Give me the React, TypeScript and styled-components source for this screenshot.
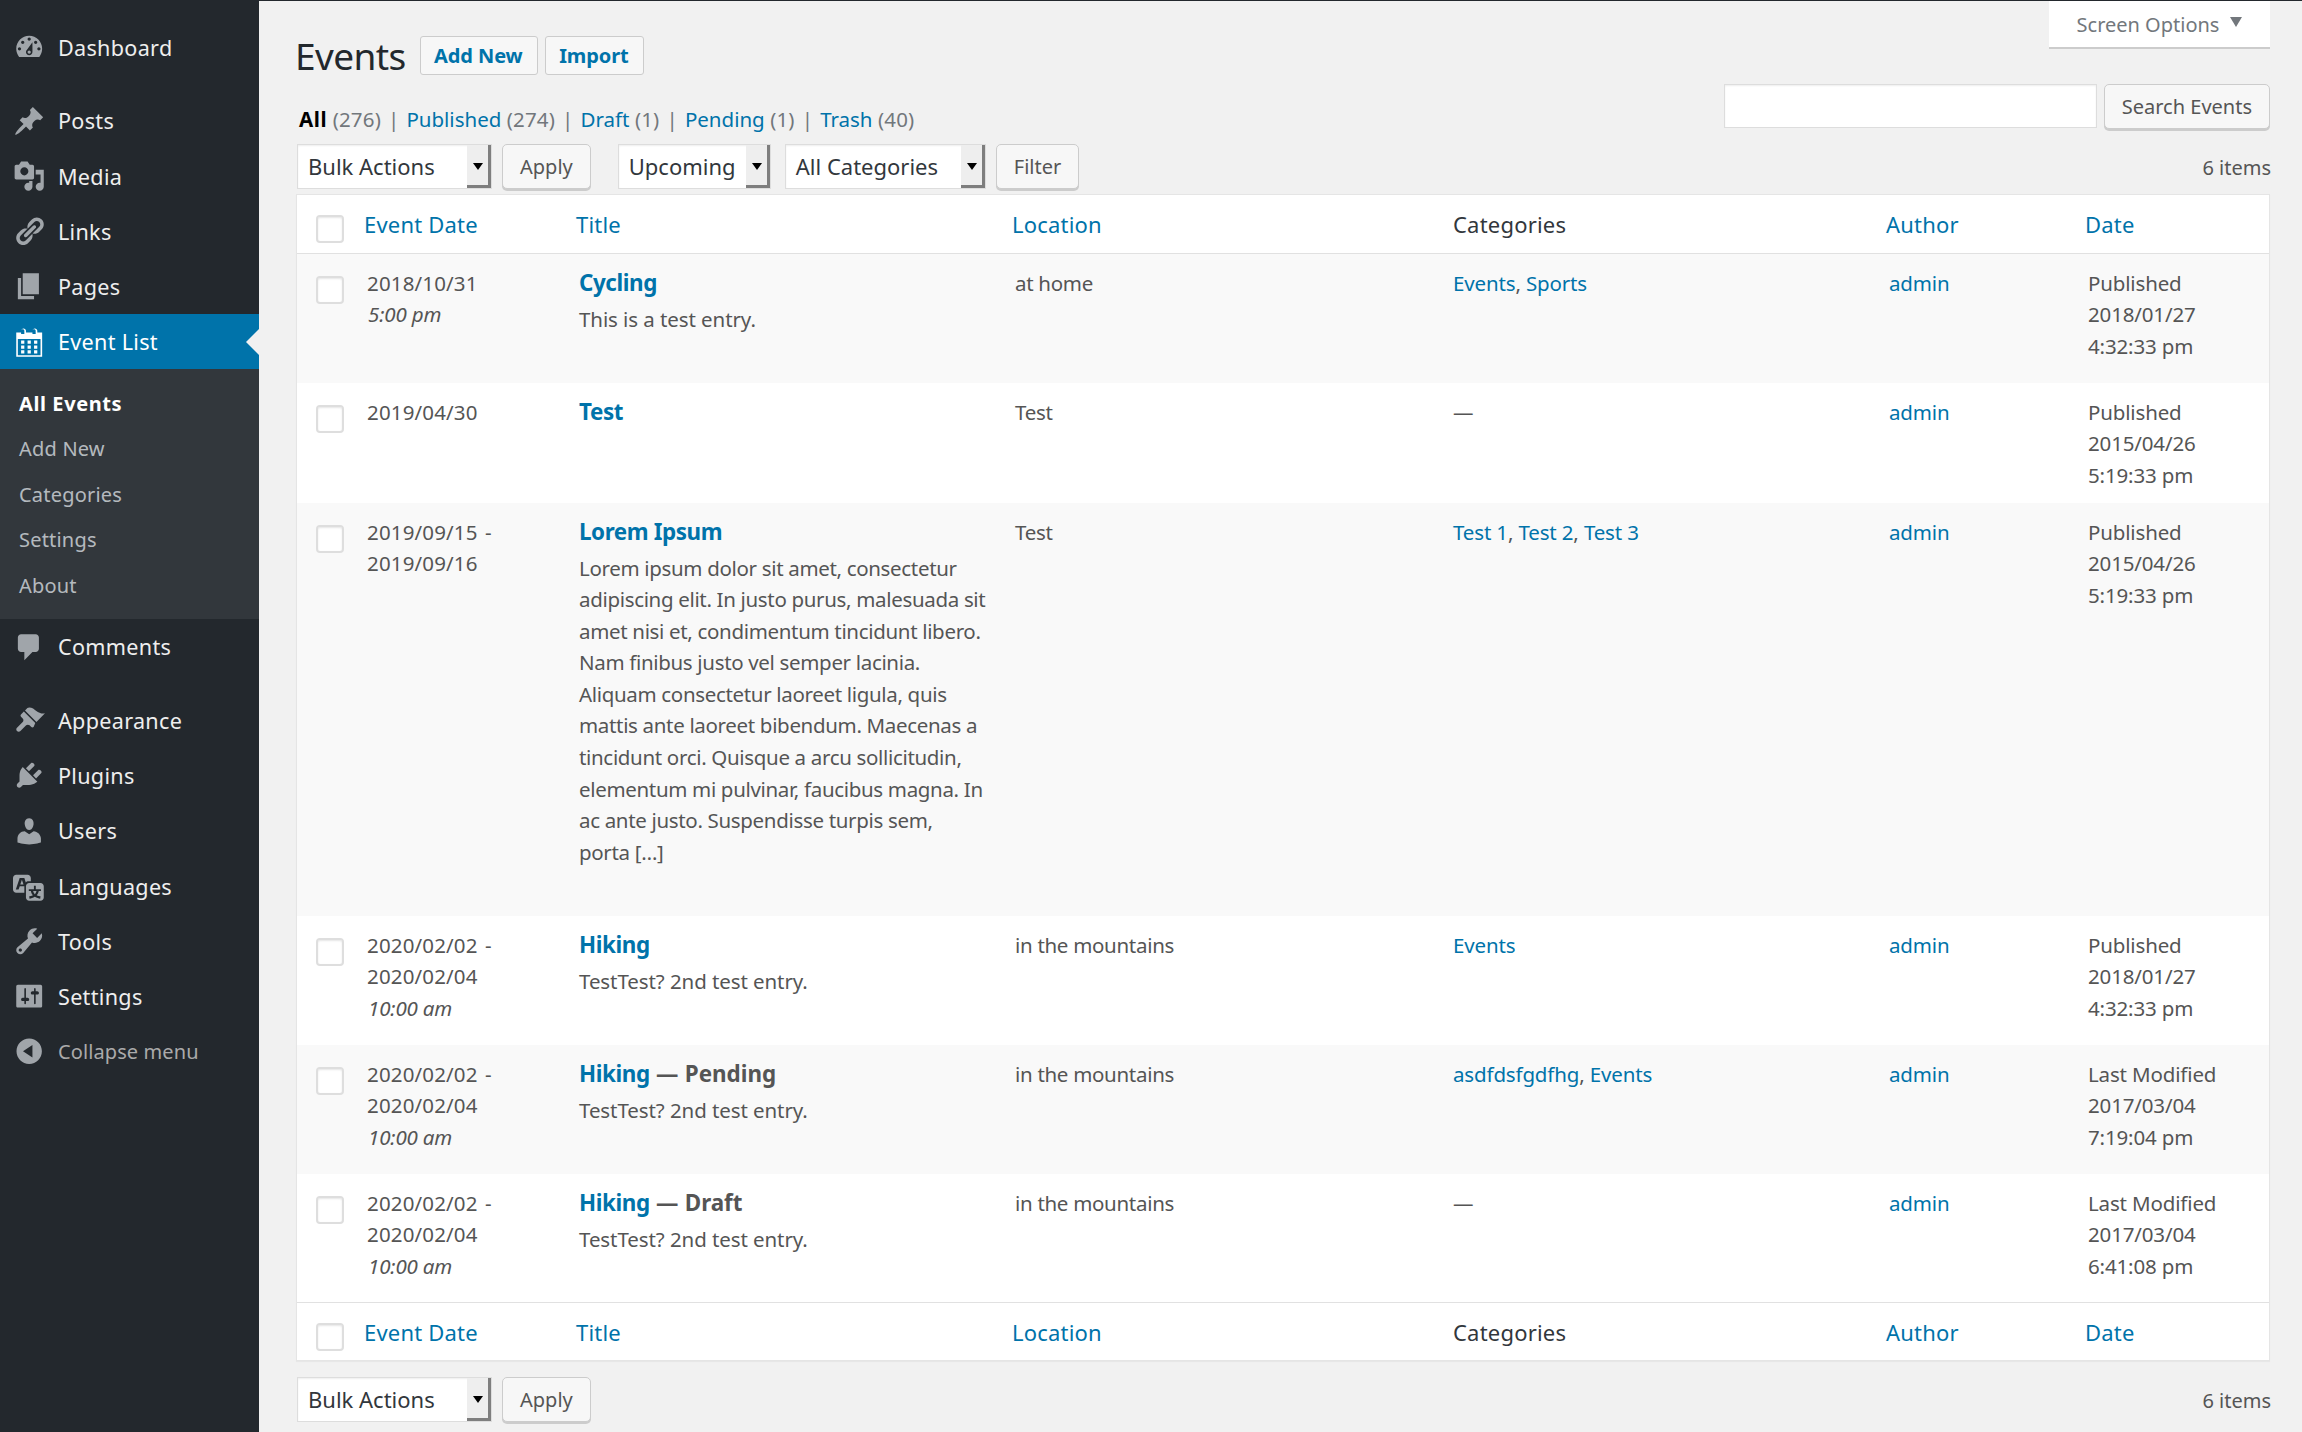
import React from "react";
import styled, { createGlobalStyle } from "styled-components";

const FONT = `"Noto Sans", "Open Sans", sans-serif`;

const GlobalStyle = createGlobalStyle`
	html, body {
		margin: 0;
		padding: 0;
		background: #f1f1f1;
		font-family: ${FONT};
	}
	* {
		box-sizing: border-box;
	}
`;

const Page = styled.div`
	display: flex;
	width: 2302px;
	min-height: 1432px;
	background: #f1f1f1;
	overflow: hidden;
`;

/* sidebar */
const Sidebar = styled.nav`
	width: 259px;
	flex: none;
	background: #23282d;
	padding-top: 19.8px;
`;

const MenuItem = styled.div<{ $active?: boolean }>`
	position: relative;
	display: flex;
	align-items: center;
	height: 55.2px;
	padding-left: 13px;
	gap: 12.6px;
	color: #eee;
	font-size: 21.6px;
	letter-spacing: 0.3px;
	background: ${(p) => (p.$active ? "#0073aa" : "transparent")};
	svg {
		fill: ${(p) => (p.$active ? "#fff" : "#a0a5aa")};
	}
	${(p) => p.$active && "color: #fff;"}
`;

const CollapseItem = styled(MenuItem)`
	color: #aaa;
	font-size: 20px;
	letter-spacing: 0.1px;
	svg {
		fill: #a0a5aa;
	}
`;

const ActiveArrow = styled.span`
	position: absolute;
	right: 0;
	top: 50%;
	margin-top: -13px;
	border: 13px solid transparent;
	border-right-color: #f1f1f1;
	border-left-width: 0;
`;

const MenuIcon = styled.svg`
	width: 32.4px;
	height: 32.4px;
	flex: none;
`;

const MenuSeparator = styled.div`
	height: 18.4px;
`;

const Submenu = styled.div`
	background: #32373c;
	padding: 11.5px 0 11px 19px;
`;

const SubItem = styled.div<{ $current?: boolean }>`
	height: 45.5px;
	line-height: 45.5px;
	font-size: 20px;
	letter-spacing: ${(p) => (p.$current ? "0.6px" : "0.2px")};
	color: ${(p) => (p.$current ? "#fff" : "rgba(240, 245, 250, 0.7)")};
	font-weight: ${(p) => (p.$current ? 700 : 400)};
`;

/* main column */
const Main = styled.main`
	flex: 1;
	min-width: 0;
	border-top: 1px solid #23282d;
	padding: 0 32px 0 37px;
	color: #555;
	font-size: 20.5px;
`;

const TopArea = styled.div`
	display: flex;
	justify-content: space-between;
	height: 143px;
`;

const TitleColumn = styled.div`
	padding-top: 35px;
`;

const TitleRow = styled.div`
	display: flex;
	align-items: center;
	height: 39px;
`;

const PageTitle = styled.h1`
	margin: 0 14px 0 -1px;
	font-size: 37px;
	font-weight: 400;
	letter-spacing: -0.6px;
	color: #23282d;
`;

const TitleAction = styled.a`
	height: 39px;
	line-height: 38px;
	padding: 0 14px 0 13.5px;
	margin-right: 7px;
	border: 1px solid #ccc;
	border-radius: 3px;
	background: #f7f7f7;
	color: #0073aa;
	font-size: 20px;
	font-weight: 700;
	letter-spacing: -0.1px;
`;

const Views = styled.div`
	display: flex;
	align-items: center;
	height: 32px;
	margin: 28px 0 0 3px;
	color: #72777c;
	font-size: 20.5px;
	letter-spacing: 0.15px;
	white-space: pre;
`;

const ViewLink = styled.a<{ $current?: boolean }>`
	color: ${(p) => (p.$current ? "#000" : "#0073aa")};
	font-weight: ${(p) => (p.$current ? 700 : 400)};
	letter-spacing: ${(p) => (p.$current ? "0.6px" : "0")};
`;

const ViewSep = styled.span`
	color: #72777c;
	margin: 0 7px;
`;

const RightColumn = styled.div`
	display: flex;
	flex-direction: column;
	align-items: flex-end;
	gap: 37px;
`;

const ScreenTab = styled.div`
	display: flex;
	align-items: center;
	justify-content: center;
	gap: 11px;
	width: 221px;
	height: 46px;
	background: #fff;
	color: #72777c;
	font-size: 20px;
	box-shadow: 0 2px 0 #ccc;
`;

const TabCaret = styled.span`
	border-style: solid;
	border-width: 10px 6.5px 0;
	border-color: #72777c transparent transparent;
	margin-top: -4px;
`;

const SearchForm = styled.div`
	display: flex;
	gap: 7px;
`;

const SearchInput = styled.div`
	width: 373px;
	height: 44px;
	background: #fff;
	border: 1px solid #ddd;
	box-shadow: inset 0 1px 2px rgba(0, 0, 0, 0.07);
`;

const Button = styled.div`
	display: flex;
	align-items: center;
	justify-content: center;
	height: 45px;
	padding: 0 17px;
	background: #f7f7f7;
	border: 1px solid #ccc;
	border-radius: 5px;
	box-shadow: 0 2px 0 #ccc;
	color: #555;
	font-size: 20px;
`;

const Toolbar = styled.div<{ $bottom?: boolean }>`
	display: flex;
	align-items: flex-start;
	height: 50px;
	padding-left: 1px;
	margin-top: ${(p) => (p.$bottom ? "16px" : "0")};
`;

const Select = styled.div<{ $width: number; $after: number; $before?: number }>`
	position: relative;
	display: flex;
	align-items: center;
	width: ${(p) => p.$width}px;
	height: 45px;
	margin-left: ${(p) => p.$before ?? 0}px;
	margin-right: ${(p) => p.$after}px;
	padding: 0 0 2px 10px;
	background: #fff;
	border: 1px solid #ddd;
	box-shadow: inset 0 1px 2px rgba(0, 0, 0, 0.07);
	color: #32373c;
	font-size: 22px;
`;

const SelectArrow = styled.span`
	position: absolute;
	right: 0;
	top: 0;
	bottom: 0;
	width: 24px;
	background: #eee;
	border-right: 3px solid #7e7e7e;
	border-bottom: 3px solid #7e7e7e;
	&::after {
		content: "";
		position: absolute;
		left: 6px;
		top: 18px;
		border-style: solid;
		border-width: 7px 5px 0;
		border-color: #000 transparent transparent;
	}
`;

const ItemCount = styled.div`
	margin-left: auto;
	margin-right: -1px;
	line-height: 48px;
	font-size: 20px;
`;

/* table */
const Table = styled.table`
	width: 1974px;
	table-layout: fixed;
	border-collapse: separate;
	border-spacing: 0;
	background: #fff;
	border: 1px solid #e5e5e5;
	box-shadow: 0 1px 1px rgba(0, 0, 0, 0.04);
`;

const HeadCell = styled.th<{ $plain?: boolean; $footer?: boolean }>`
	height: ${(p) => (p.$footer ? "58px" : "59px")};
	padding: 0 0 0 ${(p) => (p.$plain ? "16px" : "13px")};
	text-align: left;
	font-size: 22px;
	font-weight: 400;
	letter-spacing: 0.2px;
	color: ${(p) => (p.$plain ? "#32373c" : "#0073aa")};
	border-${(p) => (p.$footer ? "top" : "bottom")}: 1px solid #e1e1e1;
`;

const CheckHead = styled(HeadCell)`
	vertical-align: top;
	padding: 20px 0 0 19px;
`;

const Check = styled.span`
	display: block;
	width: 28px;
	height: 28px;
	background: #fff;
	border: 2px solid #dedede;
	border-radius: 4px;
	box-shadow: inset 0 1px 2px rgba(0, 0, 0, 0.1);
`;

const Row = styled.tr<{ $alt: boolean; $height: number }>`
	height: ${(p) => p.$height}px;
	background: ${(p) => (p.$alt ? "#f9f9f9" : "#fff")};
`;

const Cell = styled.td`
	vertical-align: top;
	padding: 13.5px 12px 0 16px;
	line-height: 31.6px;
	font-size: 20.5px;
	letter-spacing: -0.15px;
	color: #555;
`;

const LocationCell = styled(Cell)`
	letter-spacing: -0.3px;
`;

const CheckCell = styled.td`
	vertical-align: top;
	padding: 22px 0 0 19px;
`;

const DateLine = styled.div`
	letter-spacing: 0.15px;
	word-spacing: 2px;
`;

const TimeText = styled.em`
	display: block;
	font-style: italic;
	color: #555;
	padding-left: 1px;
`;

const RowTitle = styled.div`
	font-size: 22.4px;
	font-weight: 700;
	letter-spacing: -0.4px;
	color: #555;
	line-height: 31px;
	margin-top: -1px;
`;

const TitleLink = styled.a`
	color: #0073aa;
`;

const StateText = styled.span`
	letter-spacing: 0;
	word-spacing: 0.5px;
`;

const Excerpt = styled.div<{ $tight?: boolean }>`
	margin-top: 6px;
	white-space: nowrap;
	letter-spacing: ${(p) => (p.$tight ? "-0.33px" : "-0.08px")};
`;

const CellLink = styled.a`
	color: #0073aa;
`;

const ICONS: Record<string, string> = {
	dashboard:
		"M3.76 16h12.48c1.1-1.37 1.76-3.11 1.76-5 0-4.42-3.58-8-8-8s-8 3.58-8 8c0 1.89.66 3.63 1.76 5zM10 4c.55 0 1 .45 1 1s-.45 1-1 1-1-.45-1-1 .45-1 1-1zM6 6c.55 0 1 .45 1 1s-.45 1-1 1-1-.45-1-1 .45-1 1-1zm8 0c.55 0 1 .45 1 1s-.45 1-1 1-1-.45-1-1 .45-1 1-1zm-5.37 5.55L12 7v6c0 1.1-.9 2-2 2s-2-.9-2-2c0-.57.24-1.08.63-1.45zM4 10c.55 0 1 .45 1 1s-.45 1-1 1-1-.45-1-1 .45-1 1-1zm12 0c.55 0 1 .45 1 1s-.45 1-1 1-1-.45-1-1 .45-1 1-1zm-5 3c0-.55-.45-1-1-1s-1 .45-1 1 .45 1 1 1 1-.45 1-1z",
	post: "M10.44 3.02l1.82-1.82 6.36 6.35-1.83 1.82c-1.05-.68-2.48-.57-3.41.36l-.75.75c-.92.93-1.04 2.35-.35 3.41l-1.83 1.82-2.41-2.41-2.8 2.79c-.42.42-3.38 2.71-3.8 2.29s1.86-3.39 2.28-3.81l2.79-2.79L4.1 9.36l1.83-1.82c1.05.69 2.48.57 3.4-.36l.75-.75c.93-.92 1.05-2.35.36-3.41z",
	media:
		"M13 11V4c0-.55-.45-1-1-1h-1.67L9 1H5L3.67 3H2c-.55 0-1 .45-1 1v7c0 .55.45 1 1 1h10c.55 0 1-.45 1-1zM7 4.5c1.38 0 2.5 1.12 2.5 2.5S8.38 9.5 7 9.5 4.5 8.38 4.5 7 5.62 4.5 7 4.5zM14 6h5v10.5c0 1.38-1.12 2.5-2.5 2.5S14 17.88 14 16.5s1.12-2.5 2.5-2.5c.17 0 .34.02.5.05V9h-3V6zm-4 8.05V13h2v3.5c0 1.38-1.12 2.5-2.5 2.5S7 17.88 7 16.5 8.12 14 9.5 14c.17 0 .34.02.5.05z",
	links:
		"M17.74 2.76c1.68 1.69 1.68 4.41 0 6.1l-1.53 1.52c-1.12 1.12-2.7 1.47-4.14 1.09l2.62-2.61.76-.77.76-.76c.84-.84.84-2.2 0-3.04-.84-.85-2.2-.85-3.04 0l-.77.76-3.38 3.38c-.37-1.44-.02-3.02 1.1-4.14l1.52-1.53c1.69-1.68 4.42-1.68 6.1 0zM8.59 13.43l5.34-5.34c.42-.42.42-1.1 0-1.52-.44-.43-1.13-.39-1.53 0l-5.33 5.34c-.42.42-.42 1.1 0 1.52.44.43 1.13.39 1.52 0zm-.76 2.29l4.14-4.15c.38 1.44.03 3.02-1.09 4.14l-1.52 1.53c-1.69 1.68-4.41 1.68-6.1 0-1.68-1.68-1.68-4.42 0-6.1l1.53-1.52c1.12-1.12 2.7-1.47 4.14-1.1l-4.14 4.15c-.85.84-.85 2.2 0 3.05.84.84 2.2.84 3.04 0z",
	page: "M6 15V2h10v13H6zm-1 1h8v2H3V5h2v11z",
	calendar:
		"M15 4h3v15H2V4h3V3c0-.41.15-.76.44-1.06.29-.29.65-.44 1.06-.44s.77.15 1.06.44c.29.3.44.65.44 1.06v1h4V3c0-.41.15-.76.44-1.06.29-.29.65-.44 1.06-.44s.77.15 1.06.44c.29.3.44.65.44 1.06v1zM6 5h1V3c0-.27-.1-.51-.29-.71-.2-.19-.44-.29-.71-.29s-.51.1-.71.29c-.19.2-.29.44-.29.71v2zm7 0h1V3c0-.27-.1-.51-.29-.71-.2-.19-.44-.29-.71-.29s-.51.1-.71.29c-.19.2-.29.44-.29.71v2zm4 13V8H3v10h14zM7 9v2H5V9h2zm2 0h2v2H9V9zm4 2V9h2v2h-2zm-6 1v2H5v-2h2zm2 0h2v2H9v-2zm4 2v-2h2v2h-2zm-6 1v2H5v-2h2zm4 2H9v-2h2v2zm4 0h-2v-2h2v2z",
	comments:
		"M5 2h9c1.1 0 2 .9 2 2v7c0 1.1-.9 2-2 2h-2l-5 5v-5H5c-1.1 0-2-.9-2-2V4c0-1.1.9-2 2-2z",
	appearance:
		"M14.48 11.06L7.41 3.99l1.5-1.5c.5-.56 2.3-.47 3.51.32 1.21.8 1.43 1.28 2.91 2.1 1.18.64 2.45 1.26 4.45.85zm-.71.71L6.7 4.7 4.93 6.47c-.39.39-.39 1.02 0 1.41l1.06 1.06c.59.59.59 1.54 0 2.12l-3.53 3.54c-.59.59-.59 1.54 0 2.12.59.59 1.54.59 2.12 0l3.54-3.53c.59-.59 1.54-.59 2.12 0l1.06 1.06c.39.39 1.02.39 1.41 0z",
	plugins:
		"M13.11 4.36L9.87 7.6 8 5.73l3.24-3.24c.35-.34 1.05-.2 1.56.32.52.51.66 1.21.31 1.55zm-8 1.77l.91-1.12 9.01 9.01-1.19.84c-.71.71-2.63 1.16-3.82 1.16H6.14L4.9 17.26c-.59.59-1.54.59-2.12 0-.59-.58-.59-1.53 0-2.12l1.24-1.24v-3.88c0-1.13.4-3.19 1.09-3.89zm7.26 3.97l3.24-3.24c.34-.35 1.04-.21 1.55.31.52.51.66 1.21.31 1.55l-3.24 3.25z",
	users:
		"M10 9.25c-2.27 0-2.73-3.44-2.73-3.44C7 4.02 7.82 2 9.97 2c2.16 0 2.98 2.02 2.71 3.81 0 0-.41 3.44-2.68 3.44zm0 2.57L12.72 10c2.39 0 4.52 2.33 4.52 4.53v2.49s-3.65 1.13-7.24 1.13c-3.65 0-7.24-1.13-7.24-1.13v-2.49c0-2.25 1.94-4.48 4.47-4.48z",
	languages:
		"M11 7H9.49c-.63 0-1.25.3-1.59.7L7 5H4.13l-2.39 7h1.69l.74-2H7v4H2c-1.1 0-2-.9-2-2V5c0-1.1.9-2 2-2h7c1.1 0 2 .9 2 2v2zM6.51 9H4.49l1-2.93zM10 8h7c1.1 0 2 .9 2 2v7c0 1.1-.9 2-2 2h-7c-1.1 0-2-.9-2-2v-7c0-1.1.9-2 2-2zm7.25 5v-1.08h-3.17V9.75h-1.16v2.17H9.75V13h1.28c.11.85.56 1.85 1.28 2.62-.87.36-1.89.62-2.31.62-.01.02.22.97.2 1.46.84 0 2.21-.5 3.28-1.15 1.09.65 2.48 1.15 3.34 1.15-.02-.49.2-1.44.2-1.46-.43 0-1.49-.27-2.38-.63.7-.77 1.14-1.77 1.25-2.61h1.36zm-3.81 1.93c-.5-.46-.85-1.13-1.01-1.93h2.09c-.17.8-.51 1.47-1 1.93l-.04.03s-.03-.02-.04-.03z",
	tools:
		"M16.68 9.77c-1.34 1.34-3.3 1.67-4.95.99l-5.41 6.52c-.99.99-2.59.99-3.58 0s-.99-2.59 0-3.57l6.52-5.42c-.68-1.65-.35-3.61.99-4.95 1.28-1.28 3.12-1.62 4.72-1.06l-2.89 2.89 2.82 2.82 2.86-2.87c.53 1.58.18 3.39-1.08 4.65zM3.81 16.21c.4.39 1.04.39 1.43 0 .4-.4.4-1.04 0-1.43-.39-.4-1.03-.4-1.43 0-.39.39-.39 1.03 0 1.43z",
	settings:
		"M18 16V4c0-.55-.45-1-1-1H3c-.55 0-1 .45-1 1v12c0 .55.45 1 1 1h14c.55 0 1-.45 1-1zM8 11h1c.55 0 1 .45 1 1s-.45 1-1 1H8v1.5c0 .28-.22.5-.5.5s-.5-.22-.5-.5V13H6c-.55 0-1-.45-1-1s.45-1 1-1h1V5.5c0-.28.22-.5.5-.5s.5.22.5.5V11zm5-2h-1c-.55 0-1-.45-1-1s.45-1 1-1h1V5.5c0-.28.22-.5.5-.5s.5.22.5.5V7h1c.55 0 1 .45 1 1s-.45 1-1 1h-1v5.5c0 .28-.22.5-.5.5s-.5-.22-.5-.5V9z",
	collapse:
		"M10 2.16c4.33 0 7.84 3.51 7.84 7.84s-3.51 7.84-7.84 7.84S2.16 14.33 2.16 10 5.71 2.16 10 2.16zm2 11.72V6.12L6.18 9.97z",
};

const Icon = ({ name }: { name: string }) => (
	<MenuIcon viewBox="0 0 20 20">
		<path d={ICONS[name]} />
	</MenuIcon>
);

const Item = ({ icon, label }: { icon: string; label: string }) => (
	<MenuItem>
		<Icon name={icon} />
		{label}
	</MenuItem>
);

const COLUMNS = [54, 212, 436, 438, 436, 199, 197];

const lorem = [
	"Lorem ipsum dolor sit amet, consectetur",
	"adipiscing elit. In justo purus, malesuada sit",
	"amet nisi et, condimentum tincidunt libero.",
	"Nam finibus justo vel semper lacinia.",
	"Aliquam consectetur laoreet ligula, quis",
	"mattis ante laoreet bibendum. Maecenas a",
	"tincidunt orci. Quisque a arcu sollicitudin,",
	"elementum mi pulvinar, faucibus magna. In",
	"ac ante justo. Suspendisse turpis sem,",
	"porta […]",
];

type EventRow = {
	height: number;
	dates: string[];
	time?: string;
	title: string;
	state?: string;
	excerpt?: string[];
	location: string;
	categories: string[];
	status: string;
	day: string;
	clock: string;
};

const EVENTS: EventRow[] = [
	{
		height: 129,
		dates: ["2018/10/31"],
		time: "5:00 pm",
		title: "Cycling",
		excerpt: ["This is a test entry."],
		location: "at home",
		categories: ["Events", "Sports"],
		status: "Published",
		day: "2018/01/27",
		clock: "4:32:33 pm",
	},
	{
		height: 120,
		dates: ["2019/04/30"],
		title: "Test",
		location: "Test",
		categories: [],
		status: "Published",
		day: "2015/04/26",
		clock: "5:19:33 pm",
	},
	{
		height: 413,
		dates: ["2019/09/15 -", "2019/09/16"],
		title: "Lorem Ipsum",
		excerpt: lorem,
		location: "Test",
		categories: ["Test 1", "Test 2", "Test 3"],
		status: "Published",
		day: "2015/04/26",
		clock: "5:19:33 pm",
	},
	{
		height: 129,
		dates: ["2020/02/02 -", "2020/02/04"],
		time: "10:00 am",
		title: "Hiking",
		excerpt: ["TestTest? 2nd test entry."],
		location: "in the mountains",
		categories: ["Events"],
		status: "Published",
		day: "2018/01/27",
		clock: "4:32:33 pm",
	},
	{
		height: 129,
		dates: ["2020/02/02 -", "2020/02/04"],
		time: "10:00 am",
		title: "Hiking",
		state: " — Pending",
		excerpt: ["TestTest? 2nd test entry."],
		location: "in the mountains",
		categories: ["asdfdsfgdfhg", "Events"],
		status: "Last Modified",
		day: "2017/03/04",
		clock: "7:19:04 pm",
	},
	{
		height: 128,
		dates: ["2020/02/02 -", "2020/02/04"],
		time: "10:00 am",
		title: "Hiking",
		state: " — Draft",
		excerpt: ["TestTest? 2nd test entry."],
		location: "in the mountains",
		categories: [],
		status: "Last Modified",
		day: "2017/03/04",
		clock: "6:41:08 pm",
	},
];

const HeaderCells = ({ footer }: { footer?: boolean }) => (
	<tr>
		<CheckHead $footer={footer}>
			<Check />
		</CheckHead>
		<HeadCell $footer={footer}>Event Date</HeadCell>
		<HeadCell $footer={footer}>Title</HeadCell>
		<HeadCell $footer={footer}>Location</HeadCell>
		<HeadCell $footer={footer} $plain>
			Categories
		</HeadCell>
		<HeadCell $footer={footer}>Author</HeadCell>
		<HeadCell $footer={footer}>Date</HeadCell>
	</tr>
);

const BulkControls = () => (
	<>
		<Select $width={195} $after={10}>
			Bulk Actions
			<SelectArrow />
		</Select>
		<Button>Apply</Button>
	</>
);

export default function App() {
	return (
		<Page>
			<GlobalStyle />
			<Sidebar>
				<Item icon="dashboard" label="Dashboard" />
				<MenuSeparator />
				<Item icon="post" label="Posts" />
				<Item icon="media" label="Media" />
				<Item icon="links" label="Links" />
				<Item icon="page" label="Pages" />
				<MenuItem $active>
					<Icon name="calendar" />
					Event List
					<ActiveArrow />
				</MenuItem>
				<Submenu>
					<SubItem $current>All Events</SubItem>
					<SubItem>Add New</SubItem>
					<SubItem>Categories</SubItem>
					<SubItem>Settings</SubItem>
					<SubItem>About</SubItem>
				</Submenu>
				<Item icon="comments" label="Comments" />
				<MenuSeparator />
				<Item icon="appearance" label="Appearance" />
				<Item icon="plugins" label="Plugins" />
				<Item icon="users" label="Users" />
				<Item icon="languages" label="Languages" />
				<Item icon="tools" label="Tools" />
				<Item icon="settings" label="Settings" />
				<CollapseItem>
					<Icon name="collapse" />
					Collapse menu
				</CollapseItem>
			</Sidebar>
			<Main>
				<TopArea>
					<TitleColumn>
						<TitleRow>
							<PageTitle>Events</PageTitle>
							<TitleAction>Add New</TitleAction>
							<TitleAction>Import</TitleAction>
						</TitleRow>
						<Views>
							<ViewLink $current>All</ViewLink> (276)
							<ViewSep>|</ViewSep>
							<ViewLink>Published</ViewLink> (274)
							<ViewSep>|</ViewSep>
							<ViewLink>Draft</ViewLink> (1)
							<ViewSep>|</ViewSep>
							<ViewLink>Pending</ViewLink> (1)
							<ViewSep>|</ViewSep>
							<ViewLink>Trash</ViewLink> (40)
						</Views>
					</TitleColumn>
					<RightColumn>
						<ScreenTab>
							Screen Options
							<TabCaret />
						</ScreenTab>
						<SearchForm>
							<SearchInput />
							<Button>Search Events</Button>
						</SearchForm>
					</RightColumn>
				</TopArea>
				<Toolbar>
					<BulkControls />
					<Select $width={153} $after={14} $before={27}>
						Upcoming
						<SelectArrow />
					</Select>
					<Select $width={201} $after={10}>
						All Categories
						<SelectArrow />
					</Select>
					<Button>Filter</Button>
					<ItemCount>6 items</ItemCount>
				</Toolbar>
				<Table>
					<colgroup>
						{COLUMNS.map((w, i) => (
							<col key={i} style={{ width: w }} />
						))}
					</colgroup>
					<thead>
						<HeaderCells />
					</thead>
					<tbody>
						{EVENTS.map((ev, i) => (
							<Row key={i} $alt={i % 2 === 0} $height={ev.height}>
								<CheckCell>
									<Check />
								</CheckCell>
								<Cell>
									{ev.dates.map((d) => (
										<DateLine key={d}>{d}</DateLine>
									))}
									{ev.time && <TimeText>{ev.time}</TimeText>}
								</Cell>
								<Cell>
									<RowTitle>
										<TitleLink>{ev.title}</TitleLink>
										{ev.state && <StateText>{ev.state}</StateText>}
									</RowTitle>
									{ev.excerpt && (
										<Excerpt $tight={ev.excerpt.length > 1}>
											{ev.excerpt.map((line) => (
												<div key={line}>{line}</div>
											))}
										</Excerpt>
									)}
								</Cell>
								<LocationCell>{ev.location}</LocationCell>
								<Cell>
									{ev.categories.length === 0
										? "—"
										: ev.categories.map((c, j) => (
												<React.Fragment key={c}>
													{j > 0 && ", "}
													<CellLink>{c}</CellLink>
												</React.Fragment>
											))}
								</Cell>
								<Cell>
									<CellLink>admin</CellLink>
								</Cell>
								<Cell>
									<div>{ev.status}</div>
									<div>{ev.day}</div>
									<div>{ev.clock}</div>
								</Cell>
							</Row>
						))}
					</tbody>
					<tfoot>
						<HeaderCells footer />
					</tfoot>
				</Table>
				<Toolbar $bottom>
					<BulkControls />
					<ItemCount>6 items</ItemCount>
				</Toolbar>
			</Main>
		</Page>
	);
}
